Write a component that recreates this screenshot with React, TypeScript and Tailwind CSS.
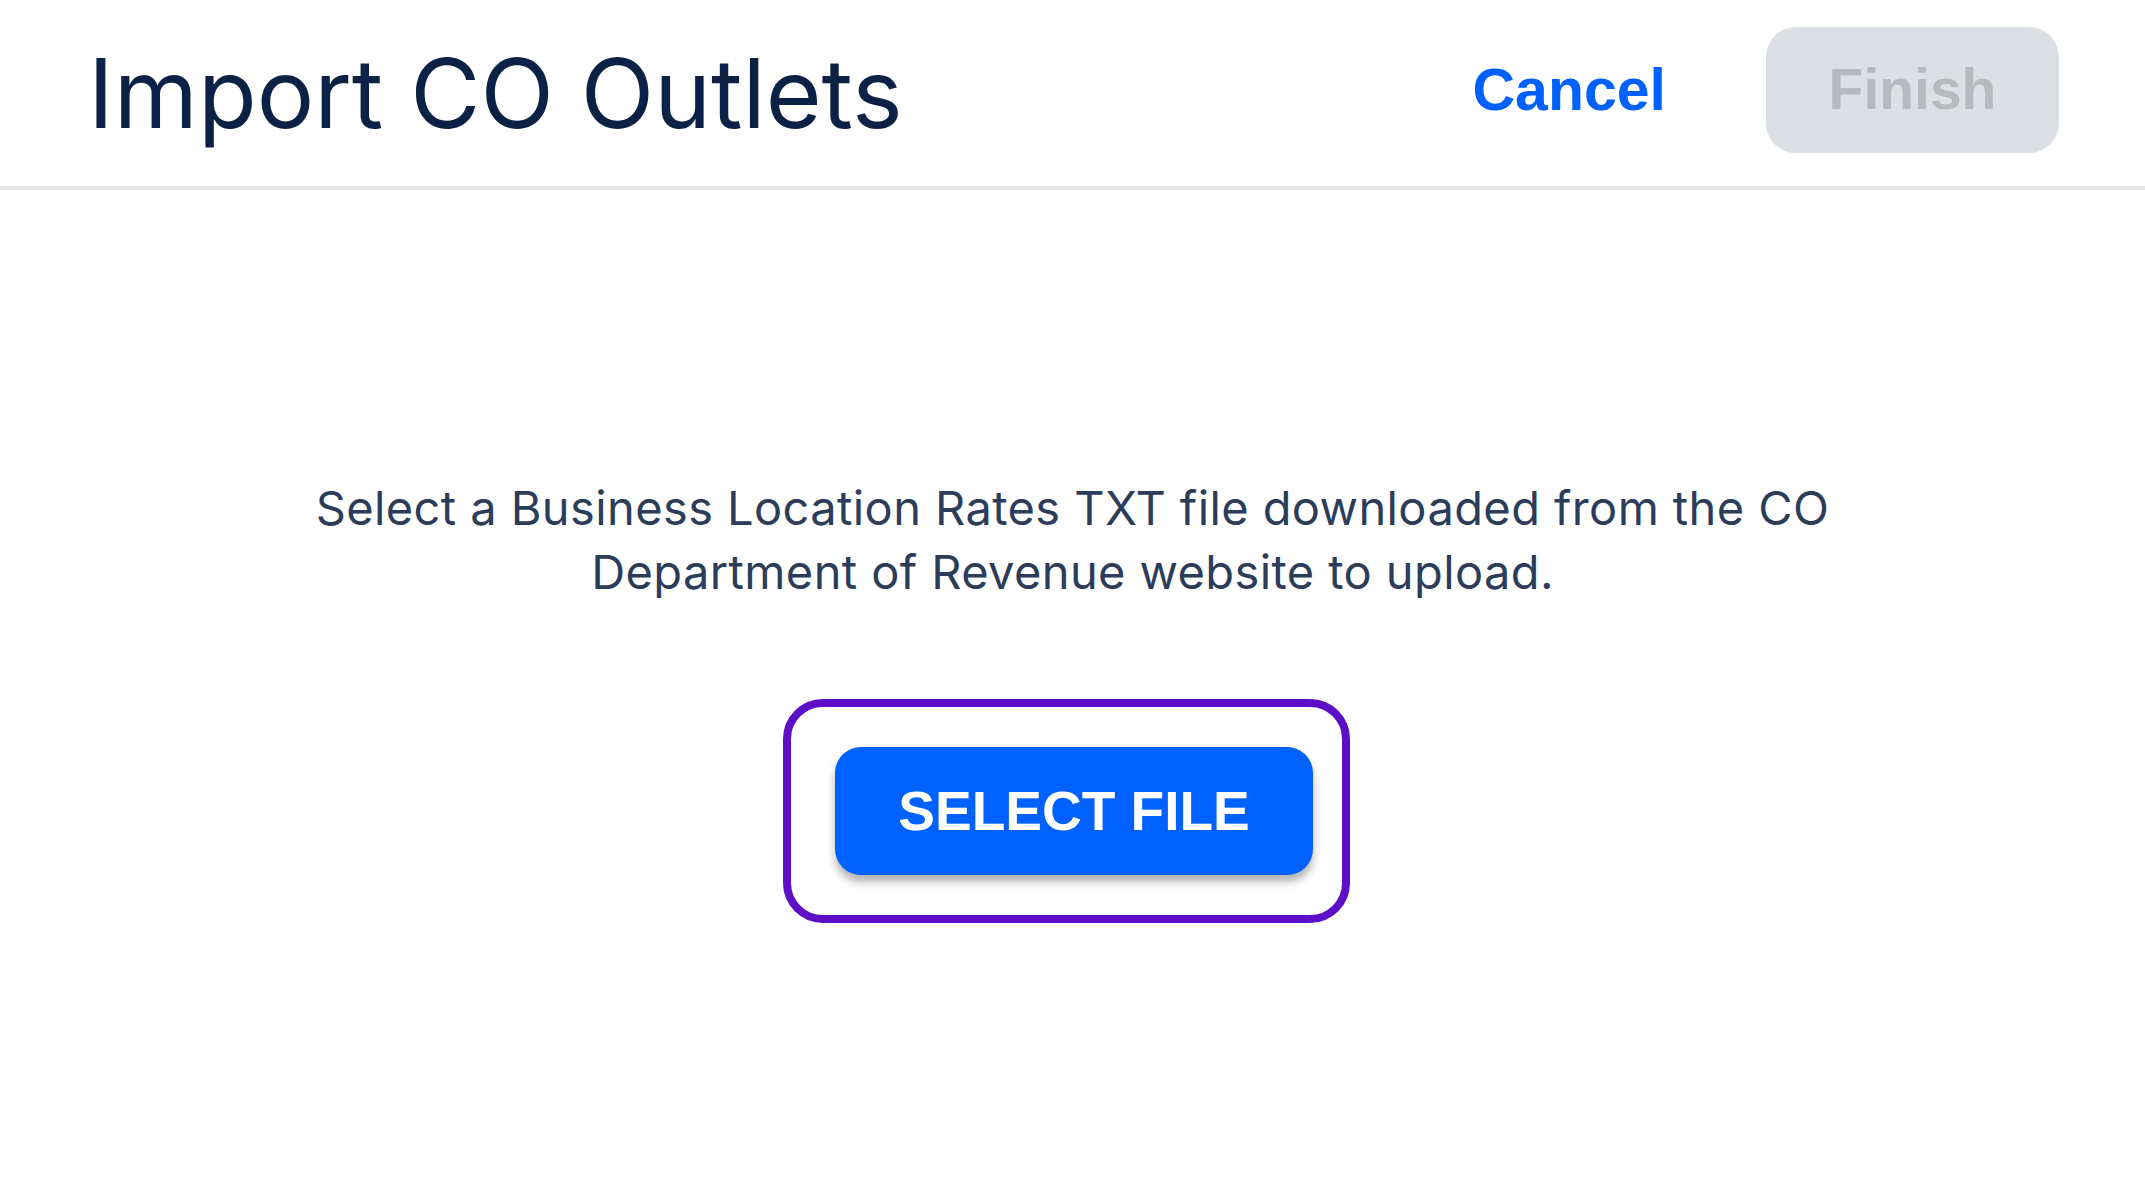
import React from 'react';

const App = () => {
  return (
    <div className="min-h-screen bg-white font-['Inter',sans-serif]">
      <header className="flex h-[190px] items-center border-b-[4px] border-[#e6e7e9] pl-[88px] pr-[86px]">
        <h1 className="m-0 text-[96px] font-normal leading-none text-[#0c2146]">Import CO Outlets</h1>
        <div className="mb-[6px] ml-auto flex items-center gap-[100px]">
          <button className="font-['Liberation_Sans',Arial,sans-serif] text-[59px] font-bold text-[#0061fe]">
            Cancel
          </button>
          <button
            disabled
            className="flex h-[126px] w-[293px] items-center justify-center rounded-[30px] bg-[#dcdfe3] font-['Liberation_Sans',Arial,sans-serif] text-[57px] font-bold text-[#b6b9bd]"
          >
            Finish
          </button>
        </div>
      </header>

      <main className="flex flex-col items-center pt-[286px]">
        <p className="m-0 max-w-[1580px] text-center text-[47px] leading-[64px] tracking-[0.4px] text-[#2b3d5a]">
          Select a Business Location Rates TXT file downloaded from the CO Department of Revenue website to upload.
        </p>

        <div className="mr-[12px] mt-[95px] flex h-[224px] items-center rounded-[40px] border-[8px] border-[#5c0fc6] pl-[44px] pr-[29px]">
          <button className="flex h-[128px] w-[478px] items-center justify-center rounded-[26px] bg-[#0061fe] font-['Liberation_Sans',Arial,sans-serif] text-[55px] font-bold text-white shadow-[0_7px_9px_rgba(0,0,0,0.3)]">
            SELECT FILE
          </button>
        </div>
      </main>
    </div>
  );
};

export default App;
